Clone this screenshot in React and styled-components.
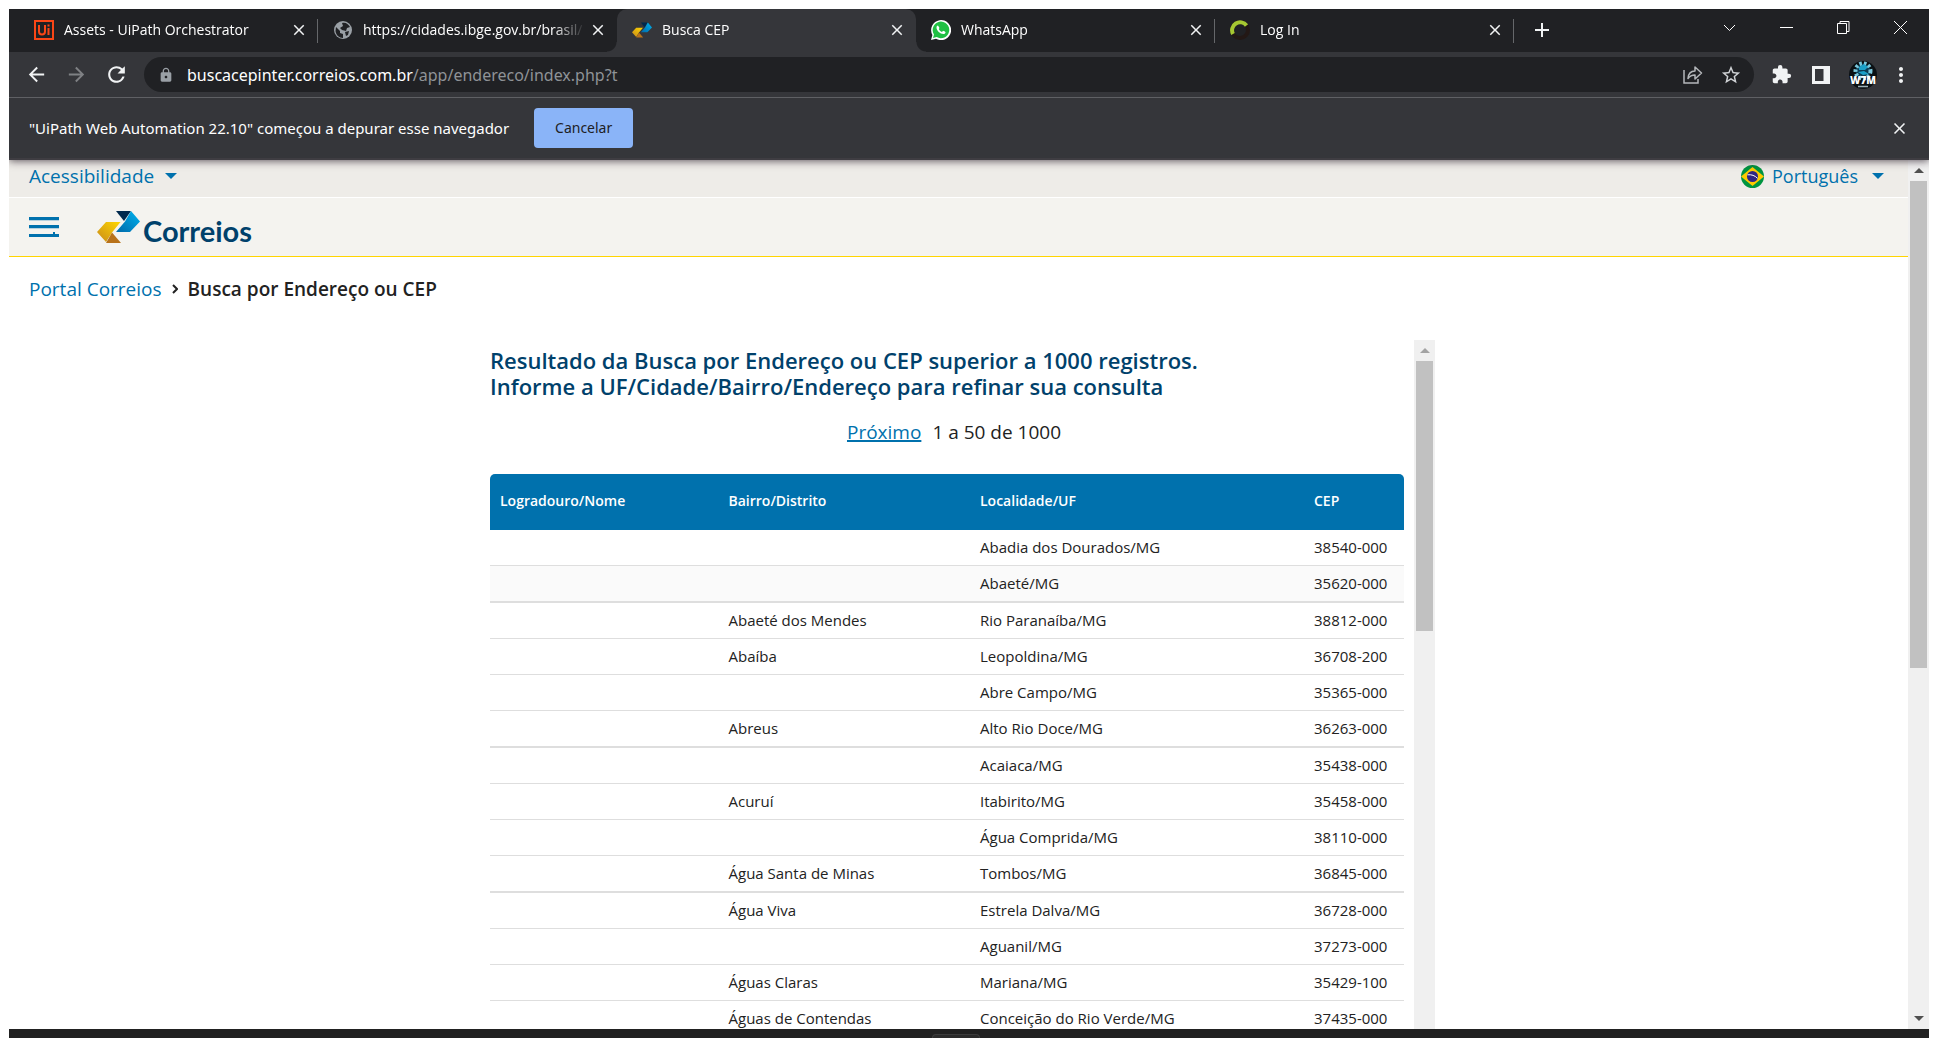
import React from "react";
import styled, { createGlobalStyle, css } from "styled-components";
import {
  MdArrowBack,
  MdArrowForward,
  MdRefresh,
  MdLock,
  MdClose,
  MdAdd,
  MdStarBorder,
  MdExtension,
  MdMoreVert,
} from "react-icons/md";

const blue = "#0071ad";
const navy = "#00416b";

const GlobalStyle = createGlobalStyle`
  *, *::before, *::after { box-sizing: border-box; }
  body {
    margin: 0;
    background: #fff;
    color: #222;
    font-family: "Open Sans", "Noto Sans", sans-serif;
  }
  button { padding: 0; border: 0; background: none; color: inherit; font: inherit; cursor: pointer; }
  a { color: ${blue}; text-decoration: none; }
  svg { display: block; flex: none; }
`;

const Screen = styled.div`
  display: flex;
  flex-direction: column;
  height: 100vh;
  padding: 9px 9px 0;
  overflow: hidden;
`;

/* ---------- browser window ---------- */

const TabStrip = styled.div`
  display: flex;
  flex: none;
  height: 43px;
  padding-left: 10px;
  background: #202124;
  color: #fff;
`;

const Tab = styled.div`
  position: relative;
  display: flex;
  align-items: center;
  flex: 0 1 299px;
  min-width: 0;
  height: 43px;
  padding: 0 10px 2px 15px;
  font-size: 14px;
  ${(p) =>
    p.$separator &&
    css`
      &::after {
        content: "";
        position: absolute;
        right: 0;
        top: 10px;
        width: 1px;
        height: 24px;
        background: #65676a;
      }
    `}
  ${(p) =>
    p.$active &&
    css`
      background: #35363a;
      border-radius: 10px 10px 0 0;
      &::before,
      &::after {
        content: "";
        position: absolute;
        bottom: 0;
        width: 10px;
        height: 10px;
      }
      &::before {
        left: -10px;
        background: radial-gradient(circle at 0 0, #202124 9px, #35363a 10px);
      }
      &::after {
        right: -10px;
        background: radial-gradient(circle at 100% 0, #202124 9px, #35363a 10px);
      }
    `}
`;

const TabTitle = styled.span`
  flex: 1;
  min-width: 0;
  margin: 0 4px 0 10px;
  overflow: hidden;
  white-space: nowrap;
  line-height: 20px;
  mask-image: linear-gradient(to right, #000 calc(100% - 32px), transparent);
`;

const IconButton = styled.button`
  display: flex;
  align-items: center;
  justify-content: center;
  flex: none;
  width: ${(p) => p.$w || 18}px;
  height: ${(p) => p.$h || 24}px;
  color: ${(p) => p.$color || "#f1f3f4"};
`;

const NewTab = styled(IconButton)`
  align-self: center;
  margin: 0 0 2px 16px;
`;

const WindowButtons = styled.div`
  display: flex;
  margin-left: auto;
  height: 36px;
`;

const Toolbar = styled.div`
  display: flex;
  align-items: center;
  flex: none;
  height: 45px;
  padding: 0 13px 0 7px;
  background: #35363a;
`;

const AddressBar = styled.div`
  display: flex;
  align-items: center;
  flex: 1;
  height: 35px;
  margin: 0 8px 0 7px;
  padding: 0 5px 0 14px;
  border-radius: 18px;
  background: #202124;
  color: #9aa0a6;
`;

const Address = styled.div`
  flex: 1;
  padding-left: 13px;
  font: 16px/24px "Noto Sans", "Open Sans", sans-serif;
  color: #8f9397;
  b {
    font-weight: 400;
    color: #fff;
  }
`;

const InfoBar = styled.div`
  position: relative;
  z-index: 1;
  display: flex;
  align-items: center;
  flex: none;
  height: 63px;
  padding: 0 18px 0 20px;
  gap: 25px;
  border-top: 1px solid #5f6064;
  border-bottom: 2px solid #3f3d42;
  background: #35363a;
  box-shadow: 0 1px 8px rgba(32, 20, 32, 0.7);
  clip-path: inset(0 0 -12px 0);
  color: #fff;
  font: 15px/20px "Noto Sans", "Open Sans", sans-serif;
`;

const CancelButton = styled.button`
  width: 99px;
  height: 40px;
  border-radius: 4px;
  background: #8ab4f8;
  color: #202124;
  font-size: 14px;
`;

const InfoClose = styled(IconButton)`
  margin-left: auto;
`;

/* ---------- scroll bars ---------- */

const ScrollTrack = styled.div`
  display: flex;
  flex-direction: column;
  align-items: center;
  flex: none;
  width: 21px;
  background: #f0f0f0;
`;

const ScrollArrow = styled.span`
  flex: none;
  display: flex;
  align-items: center;
  justify-content: center;
  width: 21px;
  height: 21px;
  &::before {
    content: "";
    border: 5px solid transparent;
    border-top-width: ${(p) => (p.$down ? 5 : 0)}px;
    border-bottom-width: ${(p) => (p.$down ? 0 : 5)}px;
    border-${(p) => (p.$down ? "top" : "bottom")}-color: ${(p) => p.$color};
  }
`;

const ScrollThumb = styled.span`
  width: 17px;
  height: ${(p) => p.$size};
  background: #c1c1c1;
`;

const ScrollSpace = styled.span`
  flex: 1;
`;

/* ---------- page ---------- */

const Viewport = styled.div`
  display: flex;
  flex: 1;
  min-height: 0;
`;

const Page = styled.div`
  display: flex;
  flex-direction: column;
  flex: 1;
  min-width: 0;
  overflow: hidden;
`;

const AccessBar = styled.div`
  display: flex;
  justify-content: space-between;
  flex: none;
  height: 38px;
  padding: 4px 24px 0 20px;
  border-bottom: 1px solid #fff;
  background: #eeece8;
`;

const MenuButton = styled.button`
  display: flex;
  align-items: center;
  height: 24px;
  gap: ${(p) => p.$gap}px;
  color: ${blue};
  font-size: ${(p) => p.$size}px;
  line-height: 24px;
`;

const Caret = styled.span`
  border: 6px solid transparent;
  border-top-color: ${blue};
  border-bottom: 0;
`;

const Language = styled.span`
  display: flex;
  align-items: center;
  gap: 8px;
`;

const Header = styled.header`
  display: flex;
  align-items: center;
  flex: none;
  height: 59px;
  padding: 0 20px;
  gap: 38px;
  border-bottom: 1px solid #ffd400;
  background: #f4f3ef;
`;

const Brand = styled.a`
  display: flex;
  align-items: center;
  gap: 3px;
  color: ${navy};
`;

const BrandName = styled.span`
  padding-top: 8px;
  font: 700 29px/32px Lato, "Open Sans", sans-serif;
`;

const Breadcrumb = styled.nav`
  display: flex;
  align-items: center;
  flex: none;
  height: 24px;
  margin: 20px 20px 39px;
  gap: 10px;
  font-size: 19px;
  line-height: 24px;
  strong {
    font-weight: 600;
  }
`;

const ResultBox = styled.main`
  display: flex;
  flex: 1;
  align-self: center;
  width: 50%;
  min-width: 953px;
  min-height: 0;
`;

const Result = styled.div`
  flex: 1;
  min-width: 0;
  padding: 7px 10px 0 8px;
  overflow: hidden;
`;

const Title = styled.h1`
  margin: 0 0 21px;
  color: ${navy};
  font-size: 22px;
  font-weight: 600;
  line-height: 26px;
`;

const Pager = styled.div`
  display: flex;
  justify-content: center;
  margin-bottom: 30px;
  padding-left: 14px;
  gap: 11px;
  font-size: 19px;
  line-height: 24px;
  a {
    text-decoration: underline;
    text-decoration-thickness: 2px;
  }
`;

const Table = styled.table`
  width: 100%;
  border-spacing: 0;
  table-layout: fixed;
  font-size: 15px;
  line-height: 20px;
  th,
  td {
    padding: 0 0 2px 10px;
    text-align: left;
    white-space: nowrap;
  }
`;

const HeadCell = styled.th`
  width: ${(p) => p.$width};
  height: 56px;
  background: ${blue};
  color: #fff;
  font-size: 14px;
  font-weight: 600;
  &:first-child {
    border-top-left-radius: 5px;
  }
  &:last-child {
    border-top-right-radius: 5px;
  }
`;

const Row = styled.tr`
  background: ${(p) => (p.$hover ? "#fafafa" : "#fff")};
  td {
    height: 36px;
    border-bottom: 1px solid #dedede;
  }
  &:nth-child(4n + 2) td {
    height: 37px;
    border-bottom-width: 2px;
  }
`;

const Taskbar = styled.footer`
  display: flex;
  justify-content: center;
  flex: none;
  height: 9px;
  padding: 5px 26px 0 0;
  background: #212121;
`;

const TaskItem = styled.span`
  width: 48px;
  border: 1px solid #3c3c3c;
  border-bottom: 0;
  border-radius: 4px 4px 0 0;
  background: #2b2b2b;
`;

/* ---------- drawings ---------- */

const UiPathIcon = () => (
  <svg width="20" height="20" viewBox="0 0 20 20" fill="none" stroke="#fa4616" strokeWidth="2">
    <path d="M1 1h18v18H1z" />
    <path d="M5 5v6.500a3 3 0 0 0 6 0V5M14.500 8v7M14.500 4.500v2" />
  </svg>
);

const GlobeIcon = () => (
  <svg width="20" height="20" viewBox="0 0 20 20">
    <circle cx="10" cy="10" r="9" fill="#9aa0a6" />
    <path d="M3 7l4 4v2l3 1v4c-4 0-7-3-7.500-7zM9 3c4-1 6 1 8 4l-3 1-1 3-4-1-2-2 3-2z" fill="#202124" />
    <path d="M12 12l4-1-1 4-2 1z" fill="#202124" />
  </svg>
);

const CorreiosMark = ({ width, height }) => (
  <svg width={width} height={height} viewBox="0 0 43 32">
    <defs>
      <linearGradient id="gold" x1="0" y1="1" x2="1" y2="0">
        <stop offset="0" stopColor="#c98a1c" />
        <stop offset="1" stopColor="#ffd800" />
      </linearGradient>
      <linearGradient id="sky" x1="0" y1="1" x2="1" y2="0">
        <stop offset="0" stopColor="#0068a8" />
        <stop offset="1" stopColor="#00b4f0" />
      </linearGradient>
    </defs>
    <path d="M19 0h15l-7 10z" fill="#00294d" />
    <path d="M34 0l9 10.500L33 21H19l9-10.500z" fill="url(#sky)" />
    <path d="M9 11h14.500L15 21.500 9 31 0 21z" fill="url(#gold)" />
    <path d="M15 21.500L24 32H9z" fill="#b8721a" />
  </svg>
);

const WhatsAppIcon = () => (
  <svg width="20" height="20" viewBox="0 0 20 20">
    <path d="M0 20l1.400-5A10 10 0 1 1 5 18.700z" fill="#fff" />
    <path d="M2 18l1-3.600A8.300 8.300 0 1 1 5.700 17z" fill="#20c043" />
    <path
      d="M7 5.500c-.8 0-1.500.9-1.500 2.100 0 3 3.800 6.500 6.800 6.500 1.400 0 2.200-.9 2.200-1.900 0-.4-2.200-1.500-2.500-1.400l-1 1.200c-1.500-.5-2.700-1.700-3.200-3L8.500 8z"
      fill="#fff"
    />
  </svg>
);

const RingIcon = () => (
  <svg width="20" height="20" viewBox="0 0 20 20" fill="none" strokeWidth="4">
    <circle cx="10" cy="10" r="8" stroke="#231815" />
    <path d="M3 14A8 8 0 0 1 16.500 5.500" stroke="#a6c832" />
  </svg>
);

const ShareIcon = () => (
  <svg width="20" height="20" viewBox="0 0 20 20" fill="none" stroke="#b4b7ba" strokeWidth="1.500">
    <path d="M1 5v13h14v-4" />
    <path d="M5 13.500c.4-5 3-7.500 7-7.500V2l6.500 6-6.500 6v-4c-3 0-5.200 1-7 3.500z" strokeLinejoin="round" />
  </svg>
);

const PanelIcon = () => (
  <svg width="18" height="18" viewBox="0 0 18 18" fill="none" stroke="#f1f3f4">
    <path d="M1.500 1.500h15v15h-15z" strokeWidth="3" />
    <path d="M13.500 1v16" strokeWidth="4" />
  </svg>
);

const AvatarText = styled.text`
  font: 800 10px "Open Sans", sans-serif;
`;

const AvatarIcon = () => (
  <svg width="28" height="28" viewBox="0 0 28 28">
    <circle cx="14" cy="14" r="14" fill="#0b1114" />
    <circle cx="14" cy="10" r="7.500" fill="#0c3d55" stroke="#7cc8dc" strokeWidth="4" strokeDasharray="2.500 2" />
    <path d="M10 6l5-3 4 3-3 3h-6zM9 11l6-1 5 3-6 1z" fill="#1aa0c8" />
    <path d="M9 25.500h10" stroke="#9fb2b8" strokeWidth="1.500" />
    <AvatarText x="14" y="23" textAnchor="middle" fill="#fff">
      W7M
    </AvatarText>
  </svg>
);

const WindowIcon = ({ d }) => (
  <svg width="15" height="15" viewBox="0 0 15 15" fill="none" stroke="#fff" strokeWidth="1">
    <path d={d} />
  </svg>
);

const MenuIcon = () => (
  <svg width="31" height="22" viewBox="0 0 31 22" fill={blue}>
    <path d="M0 1h30v3H0zM0 9h30v3H0zM0 18h30v3H0zM24 16h2v2h-2z" />
    <path d="M0 4h30v1H0zM0 12h30v1H0z" fill="#b5d1df" />
  </svg>
);

const BrazilFlag = () => (
  <svg width="23" height="23" viewBox="0 0 23 23">
    <clipPath id="disc">
      <circle cx="11.500" cy="11.500" r="11.500" />
    </clipPath>
    <g clipPath="url(#disc)">
      <path d="M0 0h23v23H0z" fill="#009440" />
      <path d="M11.500 2L23 11.500 11.500 21 0 11.500z" fill="#ffcb00" />
      <circle cx="11.500" cy="11.500" r="5.500" fill="#302681" />
      <path d="M6.500 9.800c4-.5 7.500.8 10 3.500" stroke="#fff" fill="none" />
    </g>
  </svg>
);

const Chevron = () => (
  <svg width="6" height="12" viewBox="0 0 6 12" fill="none" stroke="#222" strokeWidth="2">
    <path d="M1 2l4 4-4 4" />
  </svg>
);

/* ---------- data ---------- */

const tabs = [
  { title: "Assets - UiPath Orchestrator", icon: <UiPathIcon />, separator: true },
  { title: "https://cidades.ibge.gov.br/brasil/", icon: <GlobeIcon /> },
  { title: "Busca CEP", icon: <CorreiosMark width={20} height={20} />, active: true },
  { title: "WhatsApp", icon: <WhatsAppIcon />, separator: true },
  { title: "Log In", icon: <RingIcon />, separator: true },
];

const windowButtons = [
  ["Pesquisar guias", "M2 5l5.500 5.500L13 5"],
  ["Minimizar", "M1 7.500h13"],
  ["Restaurar", "M1.500 3.500h9v10h-9zM4 3.500v-2h9v10h-2.500"],
  ["Fechar", "M1 1l13 13M14 1L1 14"],
];

const columns = [
  ["Logradouro/Nome", "25%"],
  ["Bairro/Distrito", "auto"],
  ["Localidade/UF", "334px"],
  ["CEP", "100px"],
];

const rows = [
  ["", "Abadia dos Dourados/MG", "38540-000"],
  ["", "Abaeté/MG", "35620-000"],
  ["Abaeté dos Mendes", "Rio Paranaíba/MG", "38812-000"],
  ["Abaíba", "Leopoldina/MG", "36708-200"],
  ["", "Abre Campo/MG", "35365-000"],
  ["Abreus", "Alto Rio Doce/MG", "36263-000"],
  ["", "Acaiaca/MG", "35438-000"],
  ["Acuruí", "Itabirito/MG", "35458-000"],
  ["", "Água Comprida/MG", "38110-000"],
  ["Água Santa de Minas", "Tombos/MG", "36845-000"],
  ["Água Viva", "Estrela Dalva/MG", "36728-000"],
  ["", "Aguanil/MG", "37273-000"],
  ["Águas Claras", "Mariana/MG", "35429-100"],
  ["Águas de Contendas", "Conceição do Rio Verde/MG", "37435-000"],
];

export default function App() {
  return (
    <Screen>
      <GlobalStyle />
      <TabStrip>
        {tabs.map((tab) => (
          <Tab key={tab.title} $active={tab.active} $separator={tab.separator}>
            {tab.icon}
            <TabTitle>{tab.title}</TabTitle>
            <IconButton aria-label="Fechar guia">
              <MdClose size={18} />
            </IconButton>
          </Tab>
        ))}
        <NewTab aria-label="Nova guia" $w={24}>
          <MdAdd size={24} />
        </NewTab>
        <WindowButtons>
          {windowButtons.map(([label, d]) => (
            <IconButton key={label} aria-label={label} $w={57} $h={36}>
              <WindowIcon d={d} />
            </IconButton>
          ))}
        </WindowButtons>
      </TabStrip>

      <Toolbar>
        <IconButton aria-label="Voltar" $w={40}>
          <MdArrowBack size={23} />
        </IconButton>
        <IconButton aria-label="Avançar" $w={40} $color="#7f8184">
          <MdArrowForward size={23} />
        </IconButton>
        <IconButton aria-label="Recarregar" $w={41}>
          <MdRefresh size={25} />
        </IconButton>
        <AddressBar>
          <MdLock size={16} />
          <Address>
            <b>buscacepinter.correios.com.br</b>/app/endereco/index.php?t
          </Address>
          <IconButton aria-label="Compartilhar" $w={40}>
            <ShareIcon />
          </IconButton>
          <IconButton aria-label="Favorito" $w={36} $color="#d0d3d6">
            <MdStarBorder size={22} />
          </IconButton>
        </AddressBar>
        <IconButton aria-label="Extensões" $w={39}>
          <MdExtension size={21} />
        </IconButton>
        <IconButton aria-label="Painel lateral" $w={39}>
          <PanelIcon />
        </IconButton>
        <IconButton aria-label="Perfil" $w={46} $h={28}>
          <AvatarIcon />
        </IconButton>
        <IconButton aria-label="Menu" $w={30}>
          <MdMoreVert size={24} />
        </IconButton>
      </Toolbar>

      <InfoBar>
        <span>"UiPath Web Automation 22.10" começou a depurar esse navegador</span>
        <CancelButton>Cancelar</CancelButton>
        <InfoClose aria-label="Fechar" $w={24}>
          <MdClose size={19} />
        </InfoClose>
      </InfoBar>

      <Viewport>
        <Page>
          <AccessBar>
            <MenuButton $gap={11} $size={19}>
              Acessibilidade
              <Caret />
            </MenuButton>
            <MenuButton $gap={14} $size={18}>
              <Language>
                <BrazilFlag />
                Português
              </Language>
              <Caret />
            </MenuButton>
          </AccessBar>
          <Header>
            <IconButton aria-label="Abrir menu" $w={30}>
              <MenuIcon />
            </IconButton>
            <Brand href="#">
              <CorreiosMark width={43} height={32} />
              <BrandName>Correios</BrandName>
            </Brand>
          </Header>
          <Breadcrumb>
            <a href="#">Portal Correios</a>
            <Chevron />
            <strong>Busca por Endereço ou CEP</strong>
          </Breadcrumb>
          <ResultBox>
            <Result>
              <Title>
                Resultado da Busca por Endereço ou CEP superior a 1000 registros.
                <br />
                Informe a UF/Cidade/Bairro/Endereço para refinar sua consulta
              </Title>
              <Pager>
                <a href="#">Próximo</a>
                <span>1 a 50 de 1000</span>
              </Pager>
              <Table>
                <thead>
                  <tr>
                    {columns.map(([name, width]) => (
                      <HeadCell key={name} $width={width}>
                        {name}
                      </HeadCell>
                    ))}
                  </tr>
                </thead>
                <tbody>
                  {rows.map(([district, city, code], i) => (
                    <Row key={city} $hover={i === 1}>
                      <td />
                      <td>{district}</td>
                      <td>{city}</td>
                      <td>{code}</td>
                    </Row>
                  ))}
                </tbody>
              </Table>
            </Result>
            <ScrollTrack aria-hidden="true">
              <ScrollArrow $color="#a3a3a3" />
              <ScrollThumb $size="270px" />
            </ScrollTrack>
          </ResultBox>
        </Page>
        <ScrollTrack aria-hidden="true">
          <ScrollArrow $color="#505050" />
          <ScrollThumb $size="56%" />
          <ScrollSpace />
          <ScrollArrow $down $color="#505050" />
        </ScrollTrack>
      </Viewport>
      <Taskbar>
        <TaskItem />
      </Taskbar>
    </Screen>
  );
}
